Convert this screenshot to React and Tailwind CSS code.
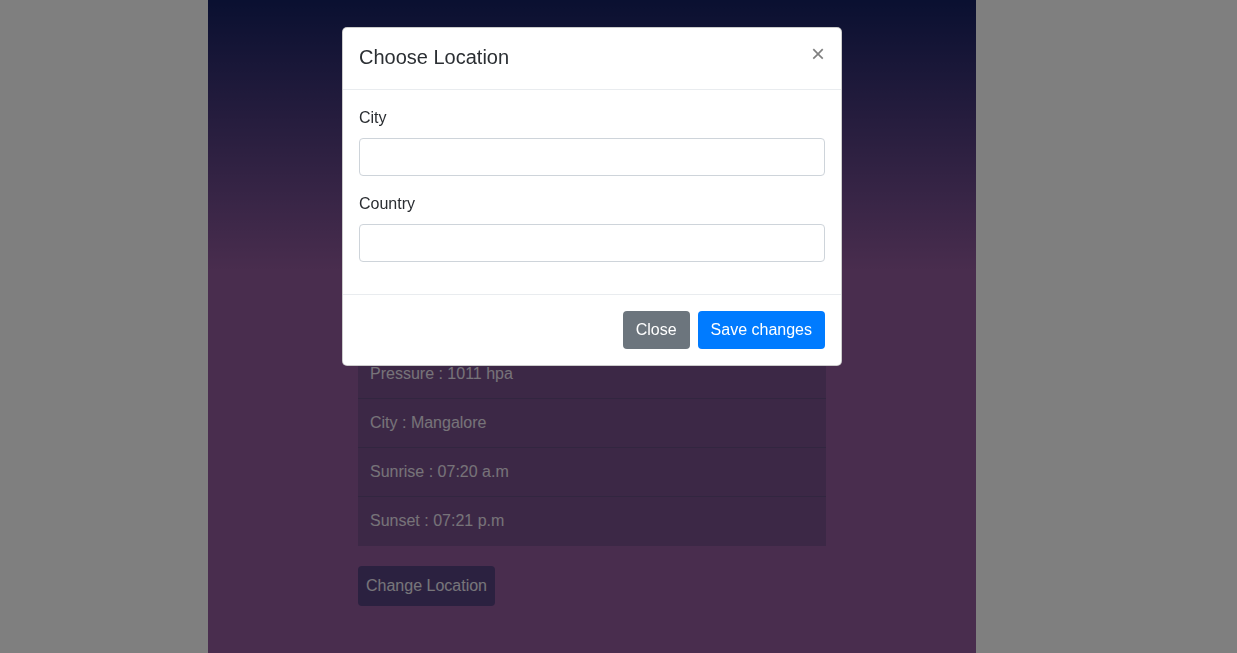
import { useState } from 'react';

const details = [
  'Weather : Haze',
  'Temperature : 29 °C',
  'Humidity : 74 %',
  'Wind : 3.1 m/s',
  'Pressure : 1011 hpa',
  'City : Mangalore',
  'Sunrise : 07:20 a.m',
  'Sunset : 07:21 p.m'
];

const App = () => {
  const [city, setCity] = useState('');
  const [country, setCountry] = useState('');

  return (
    <div className="relative min-h-screen bg-white font-['Liberation_Sans',Arial,sans-serif] text-[#2a2d31]">
      {/* page behind the modal */}
      <div className="ml-[208px] w-[768px] h-[653px] overflow-hidden bg-[linear-gradient(to_bottom,#142062_0px,#925a9c_270px,#925a9c_100%)] px-[150px] pt-[154px]">
        <ul className="bg-[#78508c]">
          {details.map((d) => (
            <li key={d} className="px-3 py-3 text-base leading-6 text-[#eee6f2] border-b border-[#644c80] last:border-b-0 last:pb-[13px]">
              {d}
            </li>
          ))}
        </ul>
        <button className="mt-5 h-10 px-2 rounded bg-[#564280] text-base text-[#eeeaf4]">
          Change Location
        </button>
      </div>

      {/* backdrop */}
      <div className="fixed inset-0 bg-black/50"></div>

      {/* modal */}
      <div className="absolute left-[342px] top-[27px] w-[500px] bg-white border border-black/20 rounded-[5px]">
        <div className="flex items-start justify-between p-4 border-b border-[#e9ecef]">
          <h5 className="relative -top-[1px] text-xl leading-[29px] font-medium text-[#2b2f33]">Choose Location</h5>
          <button className="relative -top-[2px] text-2xl font-normal leading-none text-black/50 px-0">×</button>
        </div>
        <div className="p-4">
          <div className="mb-4">
            <label className="block mb-2 text-base leading-6">City</label>
            <input
              value={city}
              onChange={(e) => setCity(e.target.value)}
              className="block w-full h-[38px] px-3 border border-[#ced4da] rounded bg-white"
            />
          </div>
          <div className="mb-4">
            <label className="block mb-2 text-base leading-6">Country</label>
            <input
              value={country}
              onChange={(e) => setCountry(e.target.value)}
              className="block w-full h-[38px] px-3 border border-[#ced4da] rounded bg-white"
            />
          </div>
        </div>
        <div className="flex justify-end gap-2 p-4 border-t border-[#e9ecef]">
          <button className="h-[38px] px-[13px] rounded bg-[#6c757d] text-white text-base">Close</button>
          <button className="h-[38px] px-[13px] rounded bg-[#007bff] text-white text-base">Save changes</button>
        </div>
      </div>
    </div>
  );
};

export default App;
